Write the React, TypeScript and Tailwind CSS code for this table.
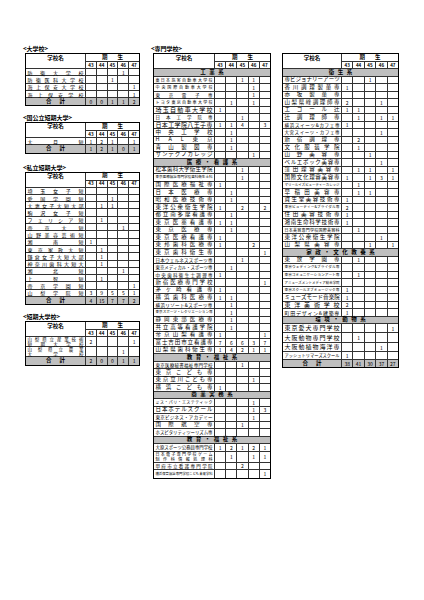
import React from "react";

type D = { t: "d"; n: string; v: number[]; mx: number; h?: string; n2?: string };
type C = { t: "c"; n: string };
type T = { t: "s"; v: number[] };
type R = D | C | T;

const d = (n: string, v: number[] = [], mx = 5, h?: string, n2?: string): D => ({ t: "d", n, v, mx, h, n2 });
const c = (n: string): C => ({ t: "c", n });
const tot = (v: number[]): T => ({ t: "s", v });

const YEARS = [43, 44, 45, 46, 47];

function Dist({ s, w, mx }: { s: string; w: number; mx: number }) {
  const chars = [...s];
  const size = Math.min(mx, 6, (w - 4) / chars.length);
  return (
    <div className="flex w-full justify-between px-[1.5px] leading-none whitespace-nowrap" style={{ fontSize: `${size}px` }}>
      {chars.map((ch, i) => (
        <span key={i}>{ch}</span>
      ))}
    </div>
  );
}

function Nums({ v, show0 }: { v: number[]; show0?: boolean }) {
  return (
    <>
      {[0, 1, 2, 3, 4].map((i) => {
        const x = v[i] ?? 0;
        return (
          <div
            key={i}
            className={`flex-1 flex items-center justify-center text-[5px] leading-none ${i ? "border-l border-[#333]" : ""}`}
          >
            {x || show0 ? x : ""}
          </div>
        );
      })}
    </>
  );
}

function Table({ rows, nwc, nw, w, rh }: { rows: R[]; nwc: string; nw: number; w: string; rh: string }) {
  return (
    <div className={`${w} border border-black bg-white flex flex-col`}>
      <div className="flex h-[15px] border-b border-[#333]">
        <div className={`${nwc} shrink-0 border-r border-[#333] flex justify-center pt-[1.5px] text-[5.5px] font-bold leading-none`}>
          学校名
        </div>
        <div className="flex-1 flex flex-col">
          <div className="h-[8px] border-b border-[#333] flex items-center justify-center gap-[10px] text-[5.5px] font-bold leading-none">
            <span>期</span>
            <span>生</span>
          </div>
          <div className="flex-1 flex">
            {YEARS.map((y, i) => (
              <div
                key={y}
                className={`flex-1 flex items-center justify-center text-[4.5px] font-bold leading-none ${i ? "border-l border-[#333]" : ""}`}
              >
                {y}
              </div>
            ))}
          </div>
        </div>
      </div>
      {rows.map((r, i) => {
        if (r.t === "c")
          return (
            <div
              key={i}
              className={`${rh} shrink-0 flex items-center justify-center gap-[3.5px] bg-[#bfbfbf] border-b border-[#333] last:border-b-0 text-[5.5px] font-bold leading-none`}
            >
              {[...r.n].map((ch, j) => (
                <span key={j}>{ch}</span>
              ))}
            </div>
          );
        if (r.t === "s")
          return (
            <div key={i} className={`${rh} shrink-0 flex bg-[#bfbfbf] border-b border-[#333] last:border-b-0`}>
              <div className={`${nwc} shrink-0 border-r border-[#333] flex items-center justify-center gap-[8px] text-[5.5px] font-bold leading-none`}>
                <span>合</span>
                <span>計</span>
              </div>
              <Nums v={r.v} show0 />
            </div>
          );
        return (
          <div key={i} className={`${r.h ?? rh} shrink-0 flex border-b border-[#333] last:border-b-0`}>
            <div className={`${nwc} shrink-0 border-r border-[#333] flex flex-col justify-center gap-[1px]`}>
              <Dist s={r.n} w={nw} mx={r.mx} />
              {r.n2 ? <Dist s={r.n2} w={nw} mx={r.mx} /> : null}
            </div>
            <Nums v={r.v} />
          </div>
        );
      })}
    </div>
  );
}

function Title({ children, cls }: { children: React.ReactNode; cls?: string }) {
  return <div className={`h-[8px] ml-[-2px] text-[6px] font-bold leading-[8px] ${cls ?? ""}`}>{children}</div>;
}

const univ: R[] = [
  d("防衛大学校", [0, 0, 0, 1, 0]),
  d("防衛医科大学校", [0, 0, 1, 0, 0]),
  d("海上保安大学校", [0, 0, 0, 0, 1]),
  d("海上保安学校", [0, 0, 0, 0, 1]),
  tot([0, 0, 1, 1, 2]),
];

const pubJC: R[] = [d("大月短", [1, 2, 1, 0, 1]), tot([1, 2, 1, 0, 1])];

const privJC: R[] = [
  d("埼玉女子短"),
  d("愛国学園短", [0, 0, 1, 0, 0]),
  d("大妻女子大短大部", [0, 1, 1, 0, 0]),
  d("駒沢女子短"),
  d("フェリシア短", [0, 1, 0, 0, 0]),
  d("帝京大短", [0, 0, 0, 1, 0]),
  d("山野美容芸術短"),
  d("湘南短", [1, 0, 0, 0, 0]),
  d("東京家政大短", [0, 1, 0, 0, 0]),
  d("鎌倉女子大短大部", [0, 1, 0, 0, 0]),
  d("神奈川歯科大短大", [0, 1, 0, 0, 0]),
  d("湘北短", [0, 0, 0, 1, 0]),
  d("上智短", [0, 1, 0, 0, 0]),
  d("帝京学園短", [0, 0, 0, 0, 1]),
  d("山梨学院短", [3, 9, 5, 5, 1]),
  tot([4, 15, 7, 7, 2]),
];

const jcSchool: R[] = [
  d("山梨県立産業技術", [2, 0, 0, 0, 1], 4.5, "h-[10px]", "短期大学校"),
  d("山梨県立農業", [0, 0, 0, 1, 0], 4.5, "h-[10px]", "大学校"),
  tot([2, 0, 0, 1, 1]),
];

const mid: R[] = [
  c("工業系"),
  d("東日本旅客自動車大学校", [0, 0, 1, 1, 0], 4),
  d("中央国際自動車大学校", [0, 0, 0, 1, 0], 4),
  d("東京電子専", [0, 0, 0, 1, 0], 4.5),
  d("トヨタ東京自動車大学校", [0, 1, 0, 1, 0], 4),
  d("埼玉自動車大学校", [1, 0, 0, 0, 0], 6),
  d("日本工学院専", [0, 0, 1, 0, 0], 4.5),
  d("日本工学院八王子専", [1, 1, 4, 0, 3], 6),
  d("中央工学校", [0, 1, 0, 0, 0], 5.5),
  d("HAL東京", [0, 1, 0, 0, 0], 5.5),
  d("青山製図専", [0, 1, 0, 0, 0], 5.5),
  d("サンテクノカレッジ", [0, 0, 0, 1, 0], 5.5),
  c("医療・看護系"),
  d("松本歯科大学衛生学院", [0, 0, 1, 0, 0], 5.5),
  d("東京医療福祉専門学校歯科衛生士科", [0, 0, 1, 0, 0], 4),
  d("国際医療福祉専", [1, 0, 0, 0, 0], 5.5),
  d("日本医療専", [0, 1, 0, 0, 0], 5.5),
  d("昭和医療技術専", [0, 1, 0, 0, 0], 5.5),
  d("東洋公衆衛生学院", [1, 0, 2, 0, 2], 5.5),
  d("都立南多摩看護専", [0, 1, 0, 0, 0], 5.5),
  d("東京医薬看護専", [1, 1, 0, 0, 0], 5.5),
  d("東京医療専", [0, 1, 0, 0, 0], 5.5),
  d("東京医療看護専", [1, 0, 0, 0, 0], 5.5),
  d("東邦歯科医療専", [1, 0, 0, 2, 0], 5.5),
  d("東京歯科衛生専", [0, 0, 0, 0, 1], 5.5),
  d("日本ウェルネススポーツ専", [0, 0, 1, 0, 0], 4.5),
  d("東京メディカル・スポーツ専", [0, 1, 0, 0, 0], 4.5),
  d("中央歯科衛生士調理専", [1, 0, 0, 0, 0], 4.5),
  d("新宿医療専門学校", [0, 0, 0, 0, 1], 5.5),
  d("茅ヶ崎看護専", [1, 0, 0, 0, 0], 5.5),
  d("横浜歯科医療専", [1, 1, 0, 0, 0], 5.5),
  d("横浜リゾート&スポーツ専", [0, 1, 0, 0, 0], 4.5),
  d("東京スポーツ・レクリエーション専", [0, 1, 0, 0, 0], 4),
  d("静岡東部医療専", [0, 1, 0, 0, 0], 5.5),
  d("共立高等看護学院", [0, 1, 0, 0, 0], 5.5),
  d("帝京山梨看護専", [1, 0, 0, 0, 1], 5.5),
  d("富士吉田市立看護専", [7, 6, 6, 3, 7], 5.5),
  d("山梨県歯科衛生専", [1, 4, 2, 1, 1], 5.5),
  c("教育・福祉系"),
  d("東京医療秘書福祉専門学校", [0, 0, 1, 0, 0], 4.5),
  d("東京こども専", [], 5.5),
  d("東京立川こども専", [0, 0, 0, 1, 0], 5.5),
  d("横浜こども専", [1, 0, 0, 0, 0], 5.5),
  c("商業実務系"),
  d("ミス・パリ・エステティック", [0, 0, 0, 1, 0], 4),
  d("日本ホテルスクール", [0, 0, 0, 1, 3], 5.5),
  d("東京ビジネス・アカデミー", [0, 0, 0, 1, 0], 4.5),
  d("国際航空専", [0, 0, 1, 0, 0], 5.5),
  d("ホスピタリティツーリズム専", [], 4.5),
  c("教育・福祉系"),
  d("大原スポーツ公務員専門学校", [1, 2, 1, 2, 1], 4.5),
  d("日本電子専門学校ゲーム", [0, 1, 0, 1, 1], 4, "h-[11px]", "制作科情報処理科"),
  d("甲府市立看護専門学院", [0, 0, 2, 0, 0], 4.5),
  d("横浜保育福祉専門学校こども未来学科", [0, 0, 0, 0, 1], 4),
];

const right: R[] = [
  c("衛生系"),
  d("専ビジョナリーアーツ", [0, 0, 1, 0, 0], 5.5),
  d("香川調理製菓専", [1, 0, 0, 0, 0], 5.5),
  d("赤坂製菓専", [], 5.5),
  d("山梨県峰調理師専", [2, 0, 0, 1, 0], 5.5),
  d("エコール辻", [1, 1, 0, 0, 0], 5.5),
  d("辻調理師専", [0, 1, 0, 1, 1], 5.5),
  d("横浜スイーツ&カフェ専", [1, 0, 0, 0, 0], 4.5),
  d("大宮スイーツ・カフェ専", [0, 0, 0, 1, 0], 4.5),
  d("新宿調理専", [0, 2, 0, 0, 0], 5.5),
  d("文化服装学院", [0, 1, 0, 0, 0], 5.5),
  d("山野美容専", [0, 0, 1, 0, 0], 5.5),
  d("ベルエポック美容専", [0, 0, 0, 1, 0], 5.5),
  d("窪田理容美容専", [0, 1, 1, 0, 1], 5.5),
  d("国際文化理容美容専", [1, 0, 1, 3, 1], 5.5),
  d("マリールイズビューティーカレッジ", [0, 1, 0, 0, 0], 4),
  d("早稲田美容専", [0, 1, 1, 0, 0], 5.5),
  d("資生堂美容技術専", [1, 0, 0, 0, 0], 5.5),
  d("東京ビューティー&ブライダル専", [2, 0, 0, 0, 0], 4),
  d("住田美容技術専", [1, 0, 0, 0, 0], 5.5),
  d("湘南生命科学技術専", [1, 0, 0, 0, 0], 5.5),
  d("日本美容専門学校国際美容科", [0, 1, 0, 0, 0], 4),
  d("東洋公衆衛生学院", [0, 0, 0, 1, 0], 5.5),
  d("山梨県美容専", [0, 0, 1, 0, 1], 5.5),
  c("家政・文化教養系"),
  d("東放学園専", [0, 1, 0, 0, 0], 5.5),
  d("東京ウェディング&ブライダル専", [], 4),
  d("東京コミュニケーションアート専", [0, 1, 0, 0, 0], 4),
  d("アミューズメントメディア総合学院", [], 4),
  d("東京スクールオブミュージック専", [1, 0, 0, 0, 0], 4),
  d("ミューズモード音楽院", [1, 0, 0, 0, 0], 6),
  d("東洋美術学校", [2, 0, 0, 0, 0], 6),
  d("町田デザイン&建築専", [1, 0, 0, 0, 0], 5),
  c("環境・動物系"),
  d("東京愛犬専門学校", [0, 0, 0, 0, 1], 6.5, "h-[9px]"),
  d("大阪動物専門学校", [0, 1, 0, 0, 0], 6.5, "h-[10px]"),
  d("大阪動植物海洋専", [0, 0, 0, 1, 0], 6.5, "h-[9px]"),
  d("アッシュトリマーズスクール", [1, 0, 0, 0, 0], 4.5),
  tot([38, 41, 30, 37, 27]),
];

export default function App() {
  return (
    <div className="w-[424px] h-[600px] bg-white text-black font-['Noto_Sans_CJK_JP','Noto_Sans',sans-serif] flex items-start pt-[45px] pl-[25px]">
      <div className="w-[115px] flex flex-col">
        <Title>{"<大学校>"}</Title>
        <Table rows={univ} nwc="w-[60px]" nw={60} w="w-[115px]" rh="h-[7.3px]" />
        <Title cls="mt-[7.5px]">{"<国公立短期大学>"}</Title>
        <Table rows={pubJC} nwc="w-[60px]" nw={60} w="w-[115px]" rh="h-[7.3px]" />
        <Title cls="mt-[10px]">{"<私立短期大学>"}</Title>
        <Table rows={privJC} nwc="w-[60px]" nw={60} w="w-[115px]" rh="h-[7.3px]" />
        <Title cls="mt-[8px]">{"<短期大学校>"}</Title>
        <Table rows={jcSchool} nwc="w-[60px]" nw={60} w="w-[115px]" rh="h-[7.3px]" />
      </div>
      <div className="w-[118px] ml-[13px] flex flex-col">
        <Title>{"<専門学校>"}</Title>
        <Table rows={mid} nwc="w-[61px]" nw={61} w="w-[118px]" rh="h-[7.5px]" />
      </div>
      <div className="w-[117px] ml-[11px] flex flex-col pt-[8px]">
        <Table rows={right} nwc="w-[59px]" nw={59} w="w-[117px]" rh="h-[7.5px]" />
      </div>
    </div>
  );
}
